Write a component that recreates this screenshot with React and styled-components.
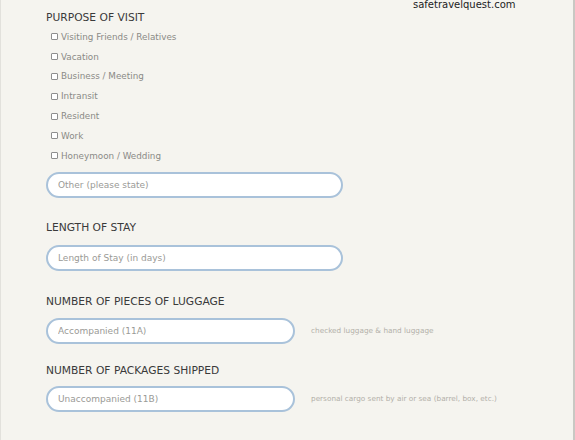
import React from "react";
import styled, { createGlobalStyle } from "styled-components";

const GlobalStyle = createGlobalStyle`
    html, body {
        margin: 0;
        padding: 0;
        background: #f5f4ef;
    }
    body {
        font-family: "DejaVu Sans", "Liberation Sans", sans-serif;
    }
`;

const purposes = [
    "Visiting Friends / Relatives",
    "Vacation",
    "Business / Meeting",
    "Intransit",
    "Resident",
    "Work",
    "Honeymoon / Wedding",
];

const App = () => {
    return (
        <Page>
            <GlobalStyle />
            <Watermark>safetravelquest.com</Watermark>

            <Heading $top={11}>PURPOSE OF VISIT</Heading>
            <CheckList>
                {purposes.map((p) => (
                    <CheckRow key={p}>
                        <Box />
                        <span>{p}</span>
                    </CheckRow>
                ))}
            </CheckList>
            <FieldRow $top={6}>
                <Input $wide placeholder="Other (please state)" />
            </FieldRow>

            <Heading $top={23}>LENGTH OF STAY</Heading>
            <FieldRow $top={10}>
                <Input $wide placeholder="Length of Stay (in days)" />
            </FieldRow>

            <Heading $top={24}>NUMBER OF PIECES OF LUGGAGE</Heading>
            <FieldRow $top={9}>
                <Input placeholder="Accompanied (11A)" />
                <Hint>checked luggage &amp; hand luggage</Hint>
            </FieldRow>

            <Heading $top={20}>NUMBER OF PACKAGES SHIPPED</Heading>
            <FieldRow $top={8}>
                <Input placeholder="Unaccompanied (11B)" />
                <Hint>personal cargo sent by air or sea (barrel, box, etc.)</Hint>
            </FieldRow>
        </Page>
    );
};

export default App;

const Page = styled.div`
    position: relative;
    box-sizing: border-box;
    height: 440px;
    overflow: hidden;
    padding: 0 0 0 45px;
    border-left: 1px solid #e2e1dc;
    border-right: 2px solid #c9c8c3;
    background: #f5f4ef;
`;

const Watermark = styled.div`
    position: absolute;
    top: -2px;
    left: 412px;
    font-size: 10px;
    color: #222;
    line-height: 14px;
`;

const Heading = styled.div`
    margin-top: ${(p) => p.$top}px;
    height: 14px;
    line-height: 14px;
    font-size: 10.7px;
    color: #3a3a3a;
`;

const CheckList = styled.div`
    display: flex;
    flex-direction: column;
    margin-top: 2px;
    padding-left: 5px;
`;

const CheckRow = styled.div`
    display: flex;
    align-items: center;
    gap: 3px;
    height: 19.8px;
    font-size: 8.8px;
    color: #8a8a86;
`;

const Box = styled.span`
    box-sizing: border-box;
    width: 7px;
    height: 7px;
    border: 1px solid #8e8e8e;
    border-radius: 1px;
    background: #fff;
`;

const FieldRow = styled.div`
    display: flex;
    align-items: center;
    gap: 16px;
    margin-top: ${(p) => p.$top}px;
`;

const Input = styled.input`
    box-sizing: border-box;
    width: ${(p) => (p.$wide ? 297 : 249)}px;
    height: 26px;
    padding: 0 10px;
    border: 2px solid #a9c2da;
    border-radius: 13px;
    background: #fff;
    font-family: inherit;
    font-size: 9px;
    outline: none;
    &::placeholder {
        color: #9a9a96;
    }
`;

const Hint = styled.span`
    font-size: 7.3px;
    color: #b3b0a9;
    white-space: nowrap;
`;
